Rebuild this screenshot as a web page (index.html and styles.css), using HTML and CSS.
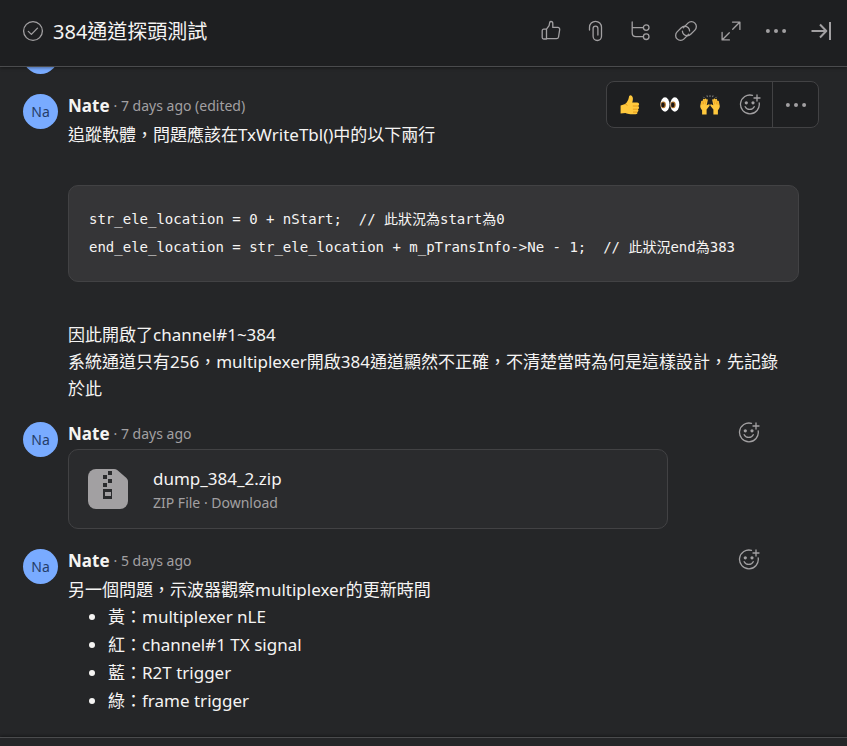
FILE: index.html
```html
<!DOCTYPE html>
<html lang="zh-Hant">
<head>
    <meta charset="UTF-8">
    <meta name="viewport" content="width=device-width, initial-scale=1">
    <title>384通道探頭測試</title>
    <link rel="stylesheet" href="styles.css">
</head>
<body>
    <svg class="sprite" aria-hidden="true">
        <symbol id="react" viewBox="0 0 22 22">
            <path d="M13.5 1.4A9.4 9.4 0 1 0 20.2 9"/>
            <path d="M18 1v6M15 4h6M6.2 12.7c1.6 3.6 7.4 3.6 9 0"/>
            <circle class="fill" cx="7.3" cy="8.8" r="1.6"/>
            <circle class="fill" cx="14" cy="8.8" r="1.6"/>
        </symbol>
        <symbol id="dots" viewBox="0 0 22 22">
            <circle class="fill" cx="2.9" cy="11" r="2"/>
            <circle class="fill" cx="11" cy="11" r="2"/>
            <circle class="fill" cx="19.1" cy="11" r="2"/>
        </symbol>
    </svg>

    <header class="task-header">
        <button class="icon-btn complete" aria-label="Mark complete">
            <svg class="icon" viewBox="0 0 22 22"><circle cx="11" cy="11" r="9.4"/><path d="M6.3 11.4l3.1 3 6.1-6.3"/></svg>
        </button>
        <h1>384通道探頭測試</h1>
        <div class="actions">
            <button class="icon-btn" aria-label="Like">
                <svg class="icon" viewBox="0 0 22 22"><path d="M6.5 9.2H3.7c-.9 0-1.5.6-1.5 1.5v6.8c0 .9.6 1.5 1.5 1.5h2.8zM6.5 9.2l2.6-3.6.6-3.1c.2-.7.7-1 1.3-1 1 0 1.8.8 1.8 1.9v4h5.1c1.2 0 2 1 1.8 2.2l-1.2 7.6c-.2 1-1 1.4-2 1.4h-10"/></svg>
            </button>
            <button class="icon-btn" aria-label="Attach">
                <svg class="icon" viewBox="0 0 22 22"><path d="M4.500 10V7.300a6 6 0 0 1 12 0v9a4.200 4.200 0 0 1-8.400 0V8.500a2.400 2.400 0 0 1 4.800 0v6.500"/></svg>
            </button>
            <button class="icon-btn" aria-label="Subtasks">
                <svg class="icon" viewBox="0 0 22 22"><path d="M2.200 2v10.800c0 2.400 1.400 3.900 3.800 3.900h7.300M2.200 7.600h11.100"/><circle cx="16.200" cy="7.600" r="2.800"/><circle cx="16.200" cy="16.700" r="2.800"/></svg>
            </button>
            <button class="icon-btn" aria-label="Copy link">
                <svg class="icon" viewBox="0 0 22 22"><path d="M8.300 7.900l4.600-4.800a4.900 4.900 0 0 1 7 7l-4.200 4.200a4.900 4.900 0 0 1-7 0c-.9-.9-1.300-2.100-1.300-3.200"/><path d="M13.700 14.100l-4.600 4.800a4.900 4.900 0 0 1-7-7l4.200-4.200a4.900 4.900 0 0 1 7 0c.9.900 1.300 2.100 1.300 3.200"/></svg>
            </button>
            <button class="icon-btn" aria-label="Full screen">
                <svg class="icon" viewBox="0 0 22 22"><path d="M12.700 9.300l7-7M12.500 2.100h7.400v7.300M9.300 12.700l-7 7M2.100 12.500v7.400h7.300"/></svg>
            </button>
            <button class="icon-btn" aria-label="More actions">
                <svg class="icon"><use href="#dots"/></svg>
            </button>
            <button class="icon-btn" aria-label="Close details">
                <svg class="icon bold" viewBox="0 0 22 22"><path d="M1.500 11h14M10 4.500l6.300 6.500-6.300 6.500M20 2v18"/></svg>
            </button>
        </div>
    </header>

    <main class="feed">
        <article class="comment">
            <span class="avatar"></span>
        </article>

        <article class="comment">
            <span class="avatar">Na</span>
            <div class="comment-main">
                <div class="comment-head">
                    <span class="author">Nate</span><span class="meta">· 7 days ago (edited)</span>
                </div>
                <p>追蹤軟體，問題應該在TxWriteTbl()中的以下兩行</p>
                <pre><code>str_ele_location = 0 + nStart;  // 此狀況為start為0
end_ele_location = str_ele_location + m_pTransInfo-&gt;Ne - 1;  // 此狀況end為383</code></pre>
                <p>因此開啟了channel#1~384</p>
                <p>系統通道只有256，multiplexer開啟384通道顯然不正確，不清楚當時為何是這樣設計，先記錄於此</p>
            </div>
            <div class="toolbar">
                <button class="icon-btn" aria-label="Thumbs up">
                    <svg class="emoji" viewBox="0 0 20 20">
                        <path fill="#ffc83d" d="M.6 10.600l4.600-1.600C7 7.300 8.500 5 8.900 2.200 9.100.8 9.900.1 11 .4c2.200.6 2.400 3.800 1.200 7.200h5c2.300 0 2.500 2.900.9 3.400 1.400.8 1.200 2.800-.2 3.200.9.900.6 2.400-.6 2.800.4 1.300-.3 2.300-1.700 2.300h-5.100c-2.300 0-3.600-.5-5-1.200l-4.900.3z"/>
                        <path fill="none" stroke="#e09112" stroke-width=".8" d="M18 11h-5.200M17.800 14.200h-4.900M17 17.100h-4M5.200 9.200c1.200-.1 1.900.5 2 1.500"/>
                    </svg>
                </button>
                <button class="icon-btn" aria-label="Eyes">
                    <svg class="emoji" viewBox="0 0 20 20">
                        <ellipse cx="5" cy="9.500" rx="4.500" ry="7.200" fill="#fff"/><ellipse cx="14.800" cy="9.500" rx="4.500" ry="7.200" fill="#fff"/>
                        <ellipse cx="3.300" cy="9.800" rx="2.600" ry="3.400" fill="#b3752a"/><ellipse cx="13.100" cy="9.800" rx="2.600" ry="3.400" fill="#b3752a"/>
                        <ellipse cx="3" cy="9.900" rx="1.700" ry="2.300" fill="#1c1716"/><ellipse cx="12.800" cy="9.900" rx="1.700" ry="2.300" fill="#1c1716"/>
                    </svg>
                </button>
                <button class="icon-btn" aria-label="Raised hands">
                    <svg class="emoji" viewBox="0 0 20 20">
                        <g id="hand">
                            <path fill="#ffc83d" d="M2.100 19.600v-4.300C.6 13.600 0 12 .3 10.500l.9-4.200c.2-.9 1.200-.8 1.200 0l.7-2c.4-1 1.500-.7 1.300.3l.7-.8c.7-.6 1.400 0 1.200.8l.5-.2c.7-.2 1.100.3.9 1l-1 4.900 1.700-.9c1.200-.6 1.900.7 1 1.500l-2.800 3.600v5.100z"/>
                            <path fill="none" stroke="#e09112" stroke-width=".6" d="M2.300 6.600l-.5 3.200M4.200 5l-.8 4.300M6.200 5l-1 4.300"/>
                        </g>
                        <use href="#hand" transform="translate(20 0) scale(-1 1)"/>
                        <path fill="none" stroke="#858585" d="M3.400 1.900l1 1M7 .4l.4 1.700M10 .2v1.800M13 .4l-.4 1.700M16.600 1.900l-1 1"/>
                    </svg>
                </button>
                <button class="icon-btn" aria-label="Add reaction">
                    <svg class="icon"><use href="#react"/></svg>
                </button>
                <button class="icon-btn more" aria-label="More">
                    <svg class="icon"><use href="#dots"/></svg>
                </button>
            </div>
        </article>

        <article class="comment">
            <span class="avatar">Na</span>
            <div class="comment-main">
                <div class="comment-head">
                    <span class="author">Nate</span><span class="meta">· 7 days ago</span>
                    <button class="icon-btn react" aria-label="Add reaction"><svg class="icon"><use href="#react"/></svg></button>
                </div>
                <div class="attachment">
                    <svg class="file-icon" viewBox="0 0 40 40" aria-hidden="true">
                        <path fill="#a2a0a2" d="M8 0h18c1.300 0 2.300.4 3.200 1.100l8.700 7.300C39.300 9.600 40 11 40 12.800V32a8 8 0 0 1-8 8H8a8 8 0 0 1-8-8V8a8 8 0 0 1 8-8z"/>
                        <path fill="#2a2b2d" d="M20 2h4v4h-4zM15 6h4v4h-4zM20 10h4v4h-4zM15 14h4v4h-4z"/>
                        <path fill="#2a2b2d" fill-rule="evenodd" d="M15 20h9v10h-9zM17 23v4h6v-4z"/>
                    </svg>
                    <div class="file-text">
                        <div class="file-name">dump_384_2.zip</div>
                        <div class="file-meta">ZIP File · <a href="#">Download</a></div>
                    </div>
                </div>
            </div>
        </article>

        <article class="comment">
            <span class="avatar">Na</span>
            <div class="comment-main">
                <div class="comment-head">
                    <span class="author">Nate</span><span class="meta">· 5 days ago</span>
                    <button class="icon-btn react" aria-label="Add reaction"><svg class="icon"><use href="#react"/></svg></button>
                </div>
                <p>另一個問題，示波器觀察multiplexer的更新時間</p>
                <ul>
                    <li>黃：multiplexer nLE</li>
                    <li>紅：channel#1 TX signal</li>
                    <li>藍：R2T trigger</li>
                    <li>綠：frame trigger</li>
                </ul>
            </div>
        </article>
    </main>

    <footer class="composer"></footer>
</body>
</html>
```
FILE: styles.css
```css
* {
    box-sizing: border-box;
}

body {
    margin: 0;
    height: 100vh;
    display: flex;
    flex-direction: column;
    background: #252628;
    color: #f5f4f3;
    font-family: "Noto Sans", "Noto Sans CJK TC", sans-serif;
    font-size: 17px;
    line-height: 27px;
}

p, h1, ul, pre {
    margin: 0;
}

.sprite {
    display: none;
}

.icon {
    display: block;
    width: 22px;
    height: 22px;
    fill: none;
    stroke: #a2a0a2;
    stroke-width: 1.3;
    stroke-linecap: round;
    stroke-linejoin: round;
}

.icon.bold {
    stroke-width: 2;
    stroke-linecap: butt;
}

.fill {
    fill: #a2a0a2;
    stroke: none;
}

.icon-btn {
    display: flex;
    align-items: center;
    justify-content: center;
    width: 32px;
    height: 32px;
    padding: 0;
    border: 0;
    border-radius: 6px;
    background: none;
    cursor: pointer;
}

.icon-btn:hover {
    background: #353638;
}

/* header */
.task-header {
    flex: none;
    display: flex;
    align-items: center;
    height: 67px;
    padding: 0 10px 4px 17px;
    background: #1e1f21;
    border-bottom: 1px solid #4a4b4d;
    box-shadow: 0 1px 3px rgba(0, 0, 0, 0.4);
    z-index: 1;
}

.task-header h1 {
    flex: 1;
    margin-left: 4px;
    font-size: 20px;
    font-weight: 400;
    white-space: nowrap;
}

.actions {
    display: flex;
    gap: 13px;
}

/* comments */
.feed {
    flex: 1;
    min-height: 0;
    overflow: hidden;
    display: flex;
    flex-direction: column;
    justify-content: flex-end;
    gap: 19px;
    padding: 0 48px 22px 23px;
}

.comment {
    position: relative;
    flex: none;
    display: flex;
    align-items: flex-start;
    gap: 10px;
}

.avatar {
    flex: none;
    width: 35px;
    height: 35px;
    margin-top: 1px;
    border-radius: 50%;
    background: #79abff;
    color: #253d68;
    font-size: 14px;
    line-height: 35px;
    text-align: center;
}

.comment-main {
    flex: 1;
    min-width: 0;
}

.comment-main p {
    padding-right: 8px;
}

.comment-head {
    display: flex;
    align-items: center;
    height: 24px;
    margin-bottom: 4px;
}

.author {
    font-weight: 700;
}

.meta {
    margin-left: 4px;
    color: #a2a0a2;
    font-size: 14px;
}

.react {
    margin: 0 34px 0 auto;
}

pre {
    margin: 37px 0 39px;
    padding: 19px 20px 20px;
    border: 1px solid #424244;
    border-radius: 10px;
    background: #353537;
    overflow: hidden;
}

code {
    display: block;
    font-family: "DejaVu Sans Mono", "Noto Sans CJK TC", monospace;
    font-size: 14px;
    line-height: 28px;
}

ul {
    padding-left: 40px;
    line-height: 28px;
}

.toolbar {
    position: absolute;
    top: -12px;
    right: -20px;
    display: flex;
    align-items: center;
    gap: 8px;
    height: 47px;
    padding-left: 7px;
    border: 1px solid #424244;
    border-radius: 8px;
    background: #1e1f21;
}

.toolbar .more {
    width: 46px;
    height: 100%;
    margin-left: -2px;
    border-left: 1px solid #424244;
    border-radius: 0 8px 8px 0;
}

.emoji {
    width: 20px;
    height: 20px;
}

.attachment {
    display: flex;
    align-items: center;
    gap: 25px;
    width: 100%;
    max-width: 600px;
    height: 80px;
    padding: 0 19px;
    border: 1px solid #424244;
    border-radius: 10px;
    background: #2a2b2d;
}

.file-icon {
    flex: none;
    width: 40px;
    height: 40px;
}

.file-text {
    padding-top: 4px;
    line-height: 24px;
}

.file-meta {
    color: #a2a0a2;
    font-size: 14px;
}

.file-meta a {
    color: inherit;
    text-decoration: none;
}

.composer {
    flex: none;
    height: 9px;
    border-top: 1px solid #4a4b4d;
    box-shadow: 0 -1px 3px rgba(0, 0, 0, 0.4);
}
```
